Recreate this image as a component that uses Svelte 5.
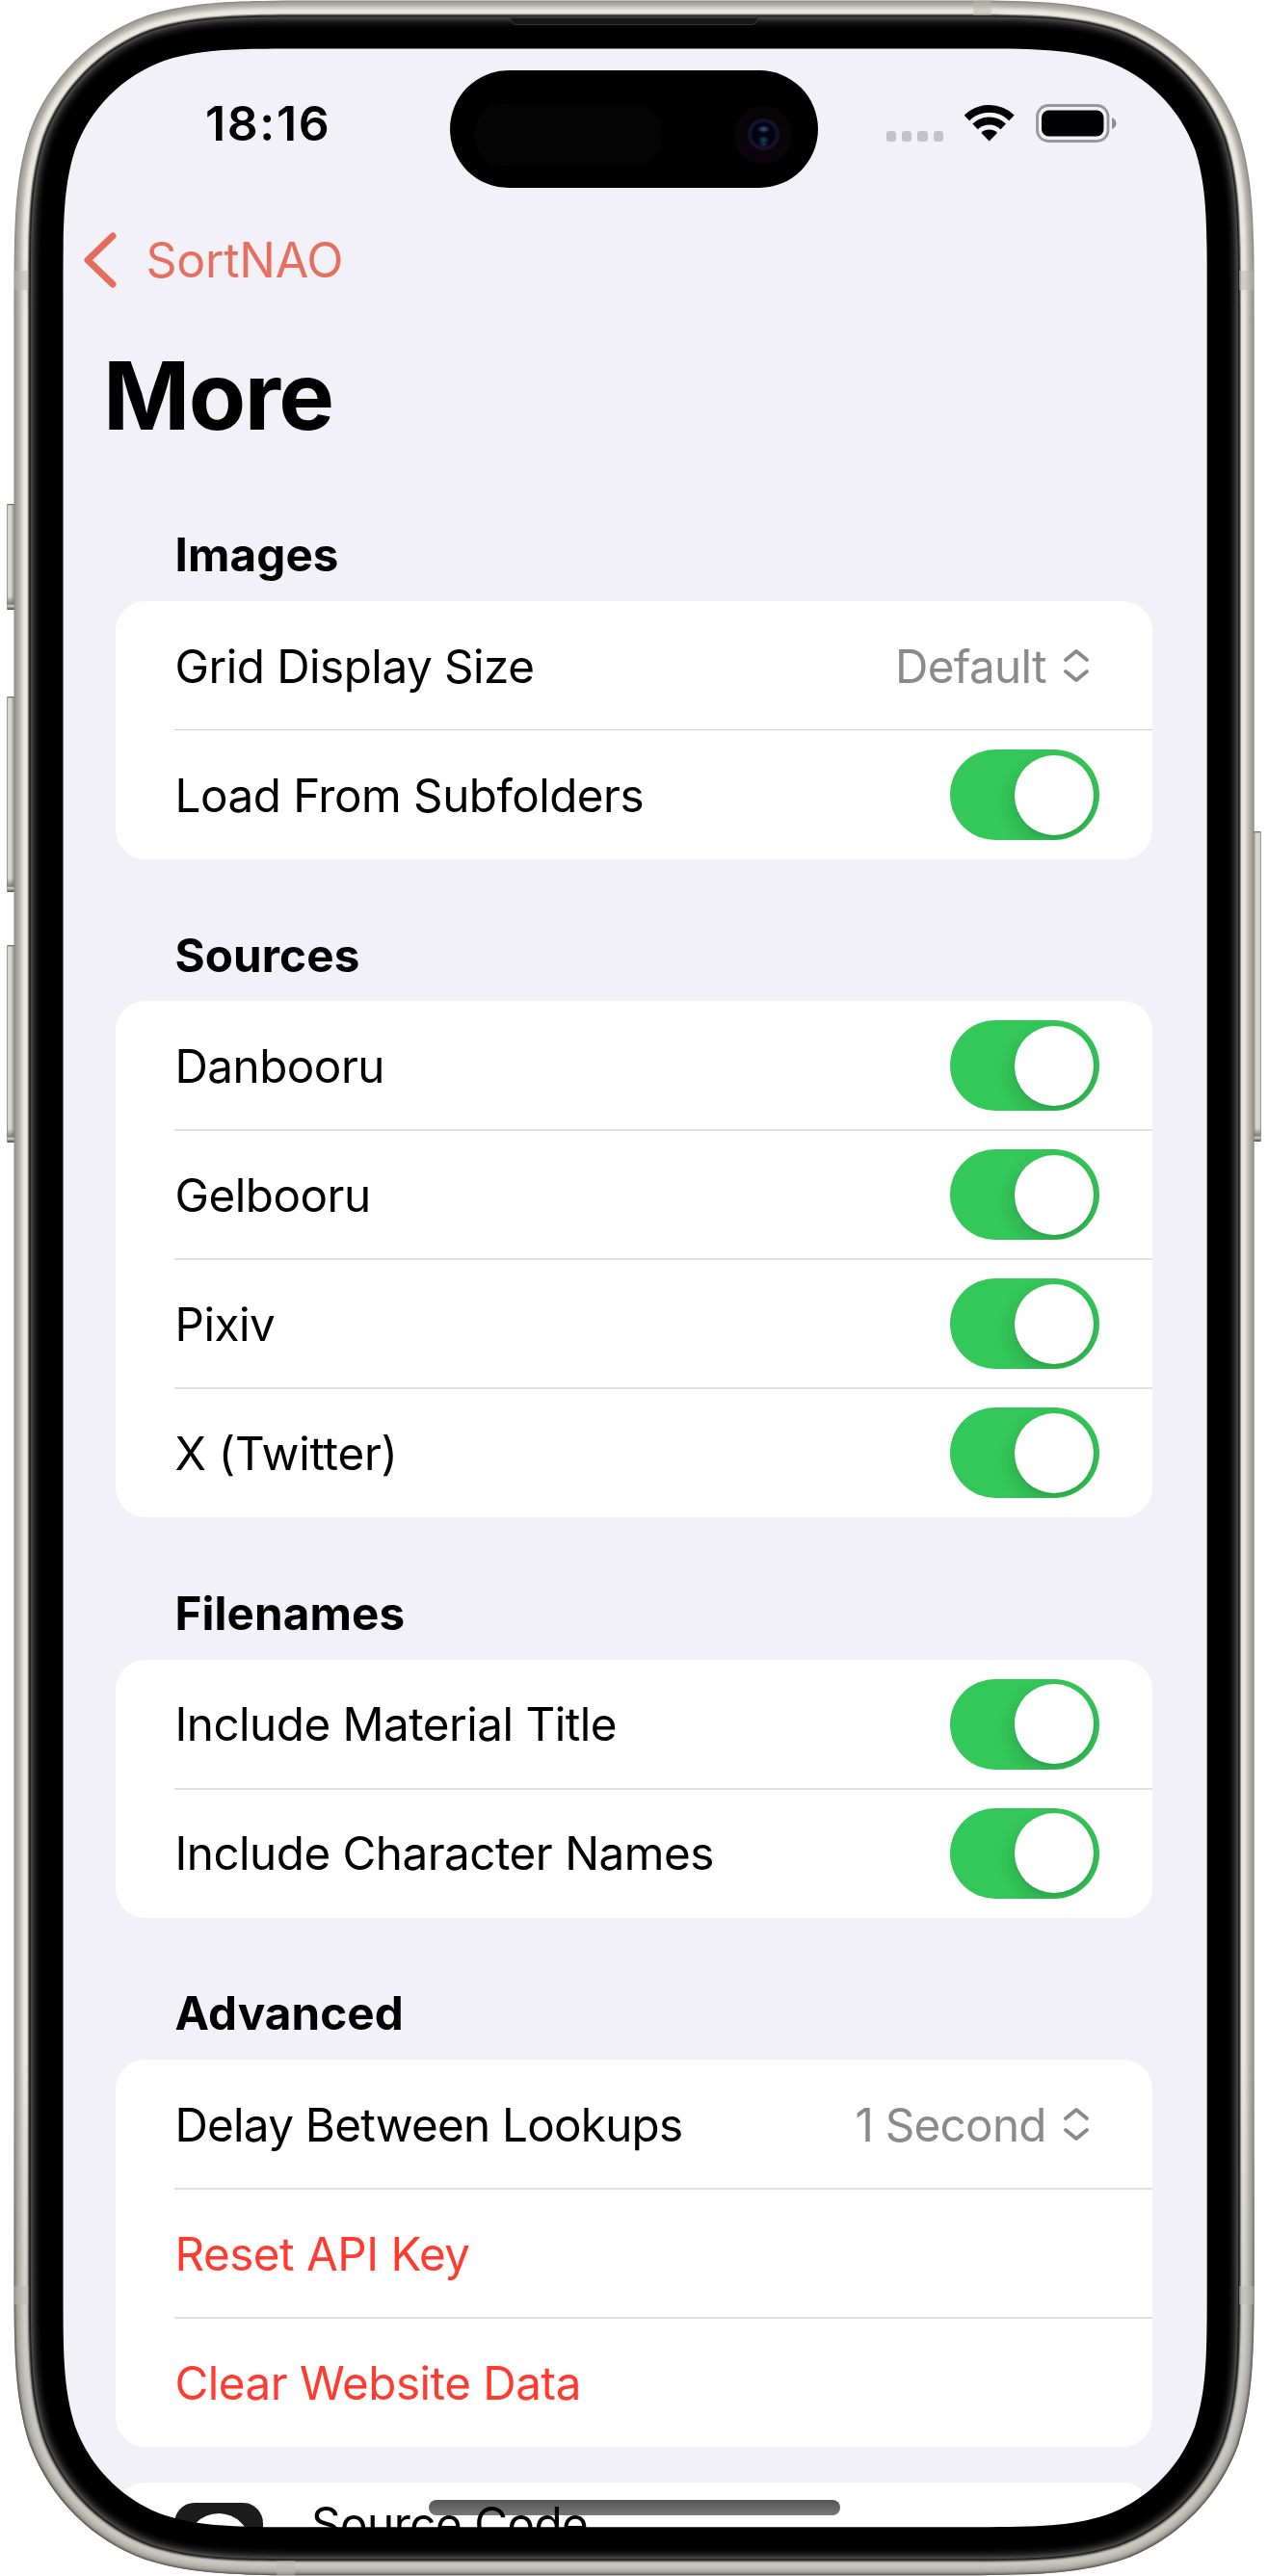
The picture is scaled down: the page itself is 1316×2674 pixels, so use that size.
<script>
  const sections = [
    {
      title: 'Images',
      thin: true,
      rows: [
        { label: 'Grid Display Size', value: 'Default' },
        { label: 'Load From Subfolders', on: true },
      ],
    },
    {
      title: 'Sources',
      rows: [
        { label: 'Danbooru', on: true },
        { label: 'Gelbooru', on: true },
        { label: 'Pixiv', on: true },
        { label: 'X (Twitter)', on: true, loose: true },
      ],
    },
    {
      title: 'Filenames',
      rows: [
        { label: 'Include Material Title', on: true },
        { label: 'Include Character Names', on: true },
      ],
    },
    {
      title: 'Advanced',
      rows: [
        { label: 'Delay Between Lookups', value: '1 Second', tight: true },
        { label: 'Reset API Key', danger: true },
        { label: 'Clear Website Data', danger: true },
      ],
    },
  ];

  // Rounded rectangle with continuous-curvature corners.
  function squircle(x0, y0, x1, y1, r) {
    const a = 1.528665 * r, b = 1.08849296 * r, c = 0.86840694 * r;
    const d = 0.63149379 * r, e = 0.07491139 * r, f = 0.37282383 * r, g = 0.16905956 * r;
    return [
      `M${x0 + a} ${y0}H${x1 - a}`,
      `C${x1 - b} ${y0} ${x1 - c} ${y0} ${x1 - d} ${y0 + e}`,
      `C${x1 - f} ${y0 + g} ${x1 - g} ${y0 + f} ${x1 - e} ${y0 + d}`,
      `C${x1} ${y0 + c} ${x1} ${y0 + b} ${x1} ${y0 + a}V${y1 - a}`,
      `C${x1} ${y1 - b} ${x1} ${y1 - c} ${x1 - e} ${y1 - d}`,
      `C${x1 - g} ${y1 - f} ${x1 - f} ${y1 - g} ${x1 - d} ${y1 - e}`,
      `C${x1 - c} ${y1} ${x1 - b} ${y1} ${x1 - a} ${y1}H${x0 + a}`,
      `C${x0 + b} ${y1} ${x0 + c} ${y1} ${x0 + d} ${y1 - e}`,
      `C${x0 + f} ${y1 - g} ${x0 + g} ${y1 - f} ${x0 + e} ${y1 - d}`,
      `C${x0} ${y1 - c} ${x0} ${y1 - b} ${x0} ${y1 - a}V${y0 + a}`,
      `C${x0} ${y0 + b} ${x0} ${y0 + c} ${x0 + e} ${y0 + d}`,
      `C${x0 + g} ${y0 + f} ${x0 + f} ${y0 + g} ${x0 + d} ${y0 + e}`,
      `C${x0 + c} ${y0} ${x0 + b} ${y0} ${x0 + a} ${y0}Z`,
    ].join('');
  }

  // Contour of the bezel: 0 is the metal's outer edge, 50 the display's edge.
  function contour(depth) {
    const t = depth / 50;
    return squircle(14.5 + 51 * t, 0.5 + 50 * t, 1301.7 - 49 * t, 2673.3 - 50 * t, 216 - 50 * t);
  }

  // A band of the bezel; shades overlap by a few pixels so no seam shows.
  const ring = (from, to = from + 4) => contour(from) + contour(to);

  const metal = ['#8b8882', '#9b9892', '#a5a29c', '#aaa7a1', '#b0ada6', '#b9b6af', '#c3c0b9', '#cecbc4', '#d9d6ce', '#e2dfd7', '#e9e6de', '#ebe8e0', '#e9e6dd', '#e0ddd5', '#8b8982', '#3a3936'];
  const metalLow = ['#5f5c57', '#7b7873', '#95928c', '#a5a29c', '#adaaa4', '#b3b0ab', '#b9b7b2', '#bdbbb6', '#c1bfba', '#c5c3be', '#c8c6c1', '#c9c7c2', '#c4c2bd', '#b2b0ab', '#77756f', '#33322f'];
  const glow = ['#1c1c1c', '#4a4a4a', '#3e3e3e', '#343434', '#2a2a2a', '#212121', '#191919', '#131313', '#0e0e0e', '#090909', '#060606', '#030303', '#000'];

  const leftButtons = [[523, 110], [723, 203], [981, 205]];
  const bands = [
    [1010, 0.5, 19, 15.5], [14.5, 281, 15, 20], [1286, 281, 15.5, 20],
    [14.5, 2373, 15, 19], [1286, 2373, 15.5, 19], [287, 2658, 19, 15],
  ];
</script>

<div class="phone">
  <div class="screen">
    <header class="status">
      <span class="time">18:16</span>
      <div class="indicators">
        <div class="dots"><i></i><i></i><i></i><i></i></div>
        <svg class="wifi" viewBox="0 0 52 38">
          <path d="M2.4 13.4A33.5 33.5 0 0 1 49 13.4M11.1 22.4A21 21 0 0 1 40.3 22.4" fill="none" stroke="#000" stroke-width="7.8" />
          <path d="M25.7 37.5L17.4 28.9A12 12 0 0 1 34 28.9Z" />
        </svg>
        <svg class="battery" viewBox="0 0 85 40">
          <rect x="1.5" y="1.5" width="73.5" height="37" rx="11.5" fill="none" stroke="#98979c" stroke-width="2.8" />
          <rect x="6" y="6.5" width="64.5" height="27" rx="7.5" />
          <path d="M79 14Q83.5 16 83.5 20Q83.5 24 79 26Z" fill="#8e8d92" />
        </svg>
      </div>
    </header>

    <nav class="nav">
      <svg class="back" viewBox="0 0 36 60">
        <path d="M32 5L6 30L32 55" fill="none" stroke="#e46d5d" stroke-width="7" stroke-linecap="round" stroke-linejoin="round" />
      </svg>
      <span>SortNAO</span>
    </nav>

    <h1>More</h1>

    {#each sections as section}
      <section class:thin={section.thin}>
        <h2>{section.title}</h2>
        <div class="card">
          {#each section.rows as row}
            <div class="row">
              <span class="label" class:danger={row.danger} class:tight={row.tight} class:loose={row.loose}>{row.label}</span>
              {#if row.on}
                <span class="toggle"><i></i></span>
              {/if}
              {#if row.value}
                <span class="value">{row.value}</span>
                <svg class="updown" viewBox="0 0 28 38">
                  <path d="M3 13L14 4L25 13M3 25L14 34L25 25" fill="none" stroke="#8a8a8e" stroke-width="3.8" stroke-linecap="round" stroke-linejoin="round" />
                </svg>
              {/if}
            </div>
          {/each}
        </div>
      </section>
    {/each}

    <div class="card links">
      <svg class="repo" viewBox="0 0 92 92">
        <rect width="92" height="92" rx="21" fill="#1c1c1c" />
        <circle cx="46" cy="44" r="33" fill="#fff" />
      </svg>
      <span class="label">Source Code</span>
    </div>
  </div>

  <div class="home"></div>

  <div class="island">
    <div class="sensor"></div>
    <div class="camera"><i></i></div>
  </div>

  <svg class="frame" viewBox="0 0 1316 2674">
    <defs>
      <linearGradient id="key" x1="0" x2="1" y1="0" y2="0">
        <stop offset="0" stop-color="#7d7a75" /><stop offset=".2" stop-color="#e3e1dc" />
        <stop offset=".5" stop-color="#d0cec9" /><stop offset=".85" stop-color="#9b9892" />
      </linearGradient>
      <linearGradient id="keyRight" x1="1" x2="0" y1="0" y2="0">
        <stop offset="0" stop-color="#8d8a85" /><stop offset=".2" stop-color="#d9d7d2" />
        <stop offset=".6" stop-color="#d5d3ce" /><stop offset="1" stop-color="#7e7b75" />
      </linearGradient>
      <linearGradient id="tip" x1="0" x2="0" y1="0" y2="1">
        <stop offset="0" stop-color="#5b5852" stop-opacity="0" />
        <stop offset=".55" stop-color="#5b5852" stop-opacity=".65" />
        <stop offset=".7" stop-color="#d9d7d2" />
        <stop offset=".85" stop-color="#8b8882" />
        <stop offset="1" stop-color="#4d4a45" />
      </linearGradient>
      <linearGradient id="fade" x1="0" x2="0" y1="0" y2="1">
        <stop offset=".8" stop-color="#000" /><stop offset=".93" stop-color="#fff" />
      </linearGradient>
      <mask id="low"><rect width="1316" height="2674" fill="url(#fade)" /></mask>
    </defs>
    {#each leftButtons as [y, h]}
      <rect x="7" {y} width="9" height={h} rx="2" fill="url(#key)" />
      <rect x="7.5" {y} width="7.5" height="1.3" fill="#77746e" />
      <rect x="7.5" y={y + h - 14} width="7.5" height="14" fill="url(#tip)" />
    {/each}
    <rect x="1300" y="863" width="9" height="322" rx="2" fill="url(#keyRight)" />
    <rect x="1301" y="863" width="7.5" height="1.3" fill="#77746e" />
    <rect x="1301" y="1171" width="7.5" height="14" fill="url(#tip)" />

    <path d={ring(10, 50)} fill-rule="evenodd" />
    {#each metal as color, i}
      <path d={ring(i)} fill={color} fill-rule="evenodd" />
    {/each}
    <g mask="url(#low)">
      {#each metalLow as color, i}
        <path d={ring(i)} fill={color} fill-rule="evenodd" />
      {/each}
    </g>
    {#each glow as color, i}
      <path d={ring(i + 16)} fill={color} fill-rule="evenodd" />
    {/each}
    {#each bands as [x, y, w, h]}
      <rect {x} {y} width={w} height={h} fill="#b9b7b0" fill-opacity=".5" />
    {/each}
    <path d="M528 18.5Q530 19 531 22T535 25.5H781Q784 25 785 22T788 18.5Z" fill="#171717" stroke="#3a3a3a" stroke-width=".9" />
  </svg>
</div>

<style>
  :global(body) {
    background: #fff;
  }
  .phone {
    position: relative;
    display: flex;
    width: 1316px;
    height: 2674px;
    overflow: hidden;
    font-family: Inter, "Liberation Sans", sans-serif;
    color: #000;
  }
  .screen {
    box-sizing: border-box;
    width: 1189px;
    height: 2574px;
    margin: 50px 0 0 65px;
    border-radius: 130px;
    overflow: hidden;
    background: #f2f1f7;
  }
  .status {
    display: flex;
    align-items: center;
    justify-content: space-between;
    height: 156px;
    padding: 0 94px 0 148px;
  }
  .time {
    font-size: 50px;
    font-weight: 600;
    letter-spacing: 1.6px;
  }
  .indicators {
    display: flex;
    align-items: center;
  }
  .dots {
    display: flex;
    gap: 5.8px;
    margin: 27px 22px 0 0;
  }
  .dots i {
    width: 10.5px;
    height: 10.5px;
    border-radius: 3px;
    background: #c4c3c8;
  }
  .wifi {
    width: 52px;
    height: 38px;
    margin-right: 22px;
  }
  .battery {
    width: 85px;
    height: 40px;
  }
  .nav {
    display: flex;
    align-items: center;
    gap: 30.5px;
    height: 127px;
    padding-left: 20px;
    font-size: 50px;
    letter-spacing: -0.3px;
    color: #e57060;
  }
  .back {
    width: 36px;
    height: 60px;
  }
  h1 {
    margin: 0;
    padding-left: 42px;
    height: 156px;
    line-height: 156px;
    font-size: 97px;
    font-weight: 700;
    letter-spacing: -1.6px;
  }
  h2 {
    display: flex;
    align-items: flex-end;
    box-sizing: border-box;
    height: 147.4px;
    margin: 0;
    padding: 0 0 17.8px 116.5px;
    font-size: 47.6px;
    font-weight: 700;
    letter-spacing: 0.1px;
    line-height: 60px;
  }
  .thin h2 {
    height: 135px;
  }
  .card {
    width: 1076px;
    margin-left: 55px;
    border-radius: 31px;
    background: #fff;
  }
  .row {
    position: relative;
    display: flex;
    align-items: center;
    box-sizing: border-box;
    height: 134px;
    padding: 0 54.7px 0 61.5px;
  }
  .row + .row::before {
    content: "";
    position: absolute;
    top: -1px;
    left: 61px;
    right: 0;
    height: 2px;
    background: #e0e0e1;
  }
  .thin .row + .row::before {
    height: 1px;
    background: #cfcfd1;
  }
  .label {
    flex: 1;
    font-size: 47.6px;
    letter-spacing: -0.5px;
    white-space: nowrap;
  }
  .tight {
    letter-spacing: -0.75px;
  }
  .loose {
    letter-spacing: -0.25px;
  }
  .danger {
    color: #ff3b30;
  }
  .value {
    margin-right: 17.5px;
    font-size: 47.6px;
    letter-spacing: -0.7px;
    color: #8a8a8e;
  }
  .updown {
    width: 28px;
    height: 38px;
    margin-right: 10px;
  }
  .toggle {
    display: flex;
    justify-content: flex-end;
    align-items: center;
    box-sizing: border-box;
    width: 155.6px;
    height: 94px;
    padding-right: 6px;
    border-radius: 47px;
    overflow: hidden;
    background: #34c759;
  }
  .toggle i {
    width: 82.6px;
    height: 83px;
    border-radius: 50%;
    background: #fff;
    box-shadow: 0 8px 20px rgba(0, 0, 0, 0.16), 0 3px 3px rgba(0, 0, 0, 0.05);
  }
  .links {
    display: flex;
    align-items: flex-start;
    gap: 50px;
    box-sizing: border-box;
    height: 200px;
    margin-top: 36.8px;
    padding: 21.5px 0 0 61px;
  }
  .links .label {
    line-height: 44px;
  }
  .repo {
    width: 92px;
    height: 92px;
  }
  .home {
    position: absolute;
    left: 445px;
    top: 2595px;
    width: 427px;
    height: 15.5px;
    border-radius: 8px;
    background: linear-gradient(#555, #787878);
    mix-blend-mode: multiply;
  }
  .island {
    position: absolute;
    left: 467px;
    top: 73px;
    display: flex;
    align-items: center;
    justify-content: space-between;
    box-sizing: border-box;
    width: 382px;
    height: 122px;
    padding: 11px 27px 0 24.5px;
    border-radius: 61px;
    background: #000;
  }
  .sensor {
    width: 195px;
    height: 66px;
    border-radius: 33px;
    background: #040404;
  }
  .camera {
    display: grid;
    place-items: center;
    width: 60px;
    height: 60px;
    border-radius: 50%;
    background: linear-gradient(#050506, #0c030c);
  }
  .camera i {
    box-sizing: border-box;
    width: 33px;
    height: 33px;
    border: 4px solid #131326;
    border-radius: 50%;
    background:
      radial-gradient(ellipse 7px 4px at 50% 28%, #4a5494, transparent),
      radial-gradient(ellipse 6px 5px at 50% 74%, #125058, transparent),
      radial-gradient(ellipse 5px 3px at 50% 92%, #5a1070, transparent),
      radial-gradient(circle at 50% 50%, #020210 55%, #0a0c45);
  }
  .frame {
    position: absolute;
    inset: 0;
    width: 1316px;
    height: 2674px;
  }
</style>
